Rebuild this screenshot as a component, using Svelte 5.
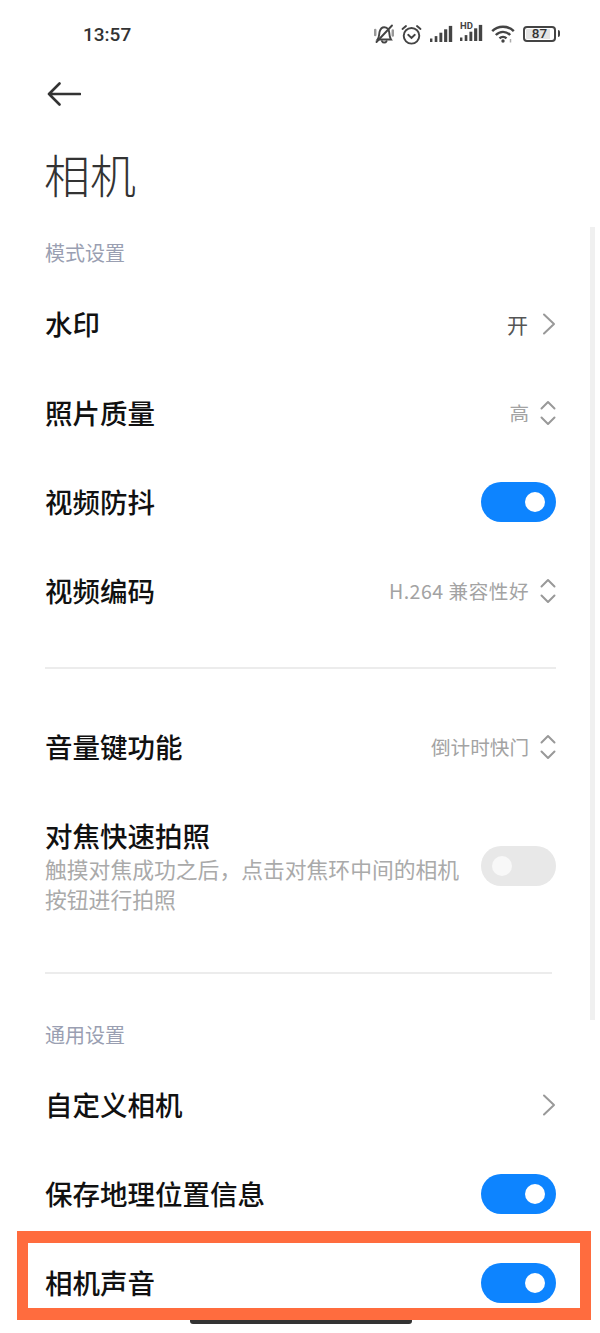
<script>
  const firstRows = [
    { label: "水印", value: "开", icon: "chevron", dark: true },
    { label: "照片质量", value: "高", icon: "updown" },
    { label: "视频防抖", toggle: true },
    { label: "视频编码", value: "H.264 兼容性好", icon: "updown", wide: true },
  ];
  const lastRows = [
    { label: "自定义相机", icon: "chevron" },
    { label: "保存地理位置信息", toggle: true },
    { label: "相机声音", toggle: true },
  ];
  const bars = [0, 1, 2, 3, 4];
</script>

{#snippet row(r)}
  <div class="row">
    <span class="label">{r.label}</span>
    {#if r.toggle}
      <span class="switch"><i></i></span>
    {:else}
      <span class="right">
        {#if r.value}<span class="value" class:dark={r.dark} class:wide={r.wide}>{r.value}</span>{/if}
        {#if r.icon === "chevron"}
          <svg class="arrow" width="14" height="24" viewBox="0 0 14 24">
            <path d="M2 2.5 L12 12 L2 21.5" />
          </svg>
        {:else}
          <svg class="arrow" width="16" height="26" viewBox="0 0 16 26">
            <path d="M1.5 8.5 L8 2 L14.5 8.5 M1.5 17.5 L8 24 L14.5 17.5" />
          </svg>
        {/if}
      </span>
    {/if}
  </div>
{/snippet}

{#snippet signal()}
  {#each bars as b}
    <rect x={b * 4.7} y={b === 0 ? 13.5 : 14.5 - b * 3.4} width={2.4 + b * 0.25} height={b === 0 ? 3.5 : 2.5 + b * 3.4} />
  {/each}
{/snippet}

<div class="page">
  <header class="status">
    <span class="time">13:57</span>
    <div class="icons">
      <svg width="20" height="20" viewBox="0 0 20 20" class="line">
        <path d="M3.5 15.5 C5.5 13 5 10 5.6 7.8 C6.4 4.8 8.6 3.2 10.2 3.2 C13 3.2 15 5.6 15.2 8.2 C15.4 11 15.5 13.5 17 15.5 Z" />
        <path d="M8 17.2 C9 19 11.5 19 12.5 17.2" />
        <path d="M2.5 18 L18 1.5" />
        <path class="faint" d="M1.2 6 V11 M18.8 6.5 V11.5" />
      </svg>
      <svg width="21" height="21" viewBox="0 0 21 21" class="line">
        <circle cx="10.5" cy="11.8" r="7.8" />
        <path d="M7.2 10.8 L10.5 14 L13.8 10.8" />
        <path d="M1.5 5 L5 2 M19.5 5 L16 2" />
      </svg>
      <svg width="23" height="18" viewBox="0 0 23 18" class="fill">
        {@render signal()}
      </svg>
      <svg width="23" height="22" viewBox="0 0 23 22" class="fill hd">
        <g transform="translate(0 3)">{@render signal()}</g>
        <text x="0" y="8">HD</text>
      </svg>
      <svg width="25" height="18" viewBox="0 0 25 18" class="line wifi">
        <path d="M1.2 6.2 C7 0.2 17 0.2 22.8 6.2" />
        <path d="M4.8 10 C9 5.8 15 5.8 19.2 10" />
        <path d="M8.5 13.4 C10.5 11.4 13.5 11.4 15.5 13.4" />
        <circle class="dot" cx="12" cy="16" r="1.7" />
        <path class="mark" d="M19.5 14 V17.5" />
      </svg>
      <span class="battery"><b>87</b></span>
    </div>
  </header>

  <nav class="back">
    <svg width="34" height="24" viewBox="0 0 34 24">
      <path d="M33 12 H2 M12.5 1.5 L2 12 L12.5 22.5" />
    </svg>
  </nav>

  <h1>相机</h1>

  <h2>模式设置</h2>
  {#each firstRows as r}
    {@render row(r)}
  {/each}

  <hr class="first" />

  {@render row({ label: "音量键功能", value: "倒计时快门", icon: "updown" })}

  <div class="row tall">
    <div class="text">
      <span class="label">对焦快速拍照</span>
      <p>触摸对焦成功之后，点击对焦环中间的相机按钮进行拍照</p>
    </div>
    <span class="switch off"><i></i></span>
  </div>

  <hr class="second" />

  <h2 class="general">通用设置</h2>
  {#each lastRows as r}
    {@render row(r)}
  {/each}

  <div class="scrollbar"></div>
  <div class="highlight"></div>
  <div class="home"></div>
</div>

<style>
  :global(body) {
    background: #fff;
  }

  .page {
    position: relative;
    width: 600px;
    height: 1333px;
    overflow: hidden;
    background: #fff;
    font-family: "Noto Sans CJK SC", "Noto Sans", sans-serif;
    color: #111;
  }

  .status {
    display: flex;
    justify-content: space-between;
    align-items: center;
    height: 68px;
    padding: 0 41px 0 83px;
    box-sizing: border-box;
  }

  .time {
    font-family: Roboto, sans-serif;
    font-size: 19px;
    font-weight: 500;
    color: #333;
  }

  .icons {
    display: flex;
    align-items: center;
    gap: 7.5px;
  }

  .line {
    fill: none;
    stroke: #444;
    stroke-width: 1.9;
    stroke-linecap: round;
  }

  .faint {
    stroke: #999;
    stroke-width: 2.5;
  }

  .wifi {
    stroke-width: 2.4;
    stroke-linecap: butt;
  }

  .mark {
    stroke: #aaa;
    stroke-width: 1.5;
  }

  .dot {
    fill: #444;
    stroke: none;
  }

  .fill {
    fill: #444;
  }

  .hd {
    margin-top: -4px;
  }

  .hd text {
    font-family: Roboto, sans-serif;
    font-size: 9.5px;
    font-weight: 700;
  }

  .battery {
    position: relative;
    display: flex;
    justify-content: center;
    align-items: center;
    width: 33px;
    height: 16px;
    margin-right: 3px;
    border: 2px solid #444;
    border-radius: 4px;
    box-sizing: border-box;
    background: linear-gradient(to right, #e4e4e4 87%, #fff 87%);
    background-clip: content-box;
    padding: 1px;
  }

  .battery::after {
    content: "";
    position: absolute;
    right: -6px;
    top: 2px;
    width: 2px;
    height: 7px;
    background: #444;
    border-radius: 0 2px 2px 0;
  }

  .battery b {
    font-family: Roboto, sans-serif;
    font-size: 13.5px;
    font-weight: 500;
    line-height: 1;
    color: #333;
  }

  .back {
    height: 52px;
    padding-left: 47px;
    display: flex;
    align-items: center;
  }

  .back svg {
    fill: none;
    stroke: #333;
    stroke-width: 2.6;
    stroke-linecap: round;
    stroke-linejoin: round;
  }

  h1 {
    margin: -5px 0 0;
    height: 116px;
    padding: 0 0 0 44px;
    box-sizing: border-box;
    font-size: 46px;
    font-weight: 300;
    line-height: 116px;
    color: #333;
  }

  h2 {
    margin: 4px 0 8px;
    height: 36px;
    padding-left: 45px;
    font-size: 20px;
    font-weight: 400;
    line-height: 36px;
    color: #9a9fb2;
  }

  h2.general {
    margin: 43px 0 8px;
    height: 35px;
    line-height: 35px;
  }

  .row {
    display: flex;
    justify-content: space-between;
    align-items: center;
    height: 89px;
    padding: 0 44px 0 45px;
    box-sizing: border-box;
  }

  .label {
    padding-bottom: 2px;
    font-size: 27.5px;
    font-weight: 500;
    line-height: 36px;
    color: #111;
  }

  .right {
    display: flex;
    align-items: center;
    gap: 11px;
  }

  .value {
    font-size: 19.6px;
    color: #a3a3a3;
  }

  .value.dark {
    margin-right: 3px;
    font-size: 21px;
    color: #555;
  }

  .value.wide {
    letter-spacing: 0.5px;
  }

  .arrow {
    fill: none;
    stroke: #999;
    stroke-width: 2;
    stroke-linecap: round;
    stroke-linejoin: round;
  }

  .switch {
    display: flex;
    justify-content: flex-end;
    align-items: center;
    flex: none;
    width: 75px;
    height: 40px;
    padding: 0 11px;
    box-sizing: border-box;
    border-radius: 20px;
    background: #0d84ff;
  }

  .switch i {
    width: 20px;
    height: 20px;
    border-radius: 50%;
    background: #fff;
  }

  .switch.off {
    justify-content: flex-start;
    margin-top: 2px;
    background: #e8e8e8;
  }

  .switch.off i {
    background: #f8f8f8;
  }

  hr {
    margin: 0;
    border: none;
    border-top: 2px solid #ececec;
  }

  hr.first {
    margin: 32px 44px 33px 45px;
  }

  hr.second {
    margin: 33px 48px 0 45px;
  }

  .tall {
    height: 148px;
  }

  .text {
    width: 420px;
    display: flex;
    flex-direction: column;
  }

  .text .label {
    padding-bottom: 0;
  }

  .text p {
    margin: 1px 0 0;
    font-size: 21.8px;
    line-height: 30px;
    color: #aaa;
  }

  .scrollbar {
    position: absolute;
    left: 590px;
    top: 227px;
    width: 5px;
    height: 793px;
    background: #f0f0f0;
  }

  .highlight {
    position: absolute;
    left: 17px;
    top: 1231px;
    width: 574px;
    height: 89px;
    box-sizing: border-box;
    border: solid #ff6c3e;
    border-width: 12px 11px;
    pointer-events: none;
  }

  .home {
    position: absolute;
    left: 190px;
    top: 1320px;
    width: 222px;
    height: 4px;
    border-radius: 0 0 3px 3px;
    background: #333;
  }
</style>
